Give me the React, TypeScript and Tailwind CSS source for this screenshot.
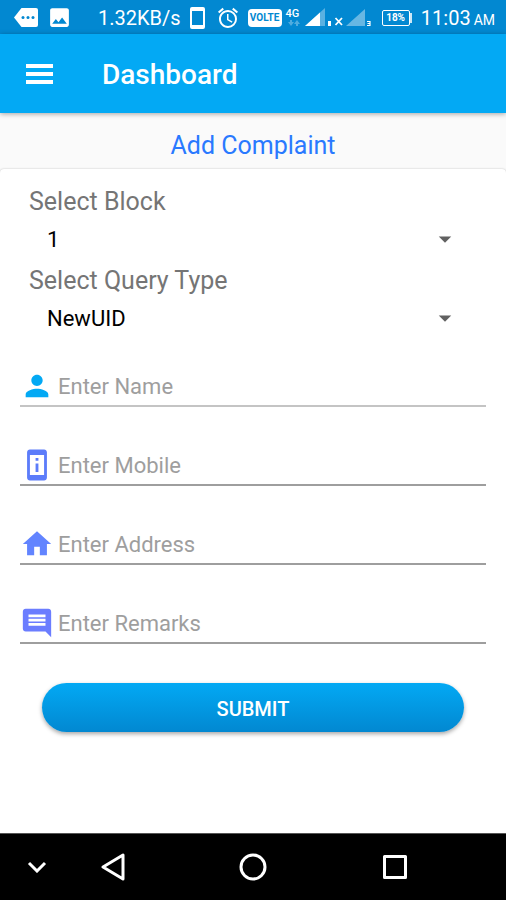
import type { ReactNode } from "react";
import { MdAlarm, MdArrowDropDown, MdComment, MdHome, MdImage, MdPerson, MdPermDeviceInformation } from "react-icons/md";

function StatusBar() {
  return (
    <div className="flex h-[34px] items-center bg-[#0288d1] pt-px pr-[11px] pl-[14px] text-white">
      <svg className="h-[19px] w-6" viewBox="0 0 24 19" aria-hidden="true">
        <path d="M7.500 0H22a2 2 0 0 1 2 2v15a2 2 0 0 1-2 2H7.500L0 9.500z" fill="currentColor" />
        <g fill="#0288d1">
          <circle cx="9" cy="9.500" r="1.500" />
          <circle cx="14" cy="9.500" r="1.500" />
          <circle cx="19" cy="9.500" r="1.500" />
        </g>
      </svg>
      <MdImage className="ml-[9px] size-[25px]" />
      <span className="ml-[26px] text-xl">1.32KB/s</span>
      <svg className="ml-[9px] h-[22px] w-[15px]" viewBox="0 0 15 22" aria-hidden="true">
        <path fillRule="evenodd" d="M2 0h11a2 2 0 0 1 2 2v18a2 2 0 0 1-2 2H2a2 2 0 0 1-2-2V2a2 2 0 0 1 2-2zm0 4v14h11V4z" fill="currentColor" />
      </svg>
      <MdAlarm className="ml-[11px] size-6" />
      <span className="ml-2 flex h-[18px] w-[34px] items-center justify-center rounded-sm bg-white text-[10px] font-bold text-[#0288d1]">VOLTE</span>
      <span className="ml-1 flex h-5 w-[15px] flex-col text-[11px] leading-[12px] font-medium">
        4G
        <svg className="ml-[2px] h-[6px] w-3 opacity-30" viewBox="0 0 12 6" aria-hidden="true">
          <path d="M3 6 0 2h2V0h2v2h2zM9 0l3 4h-2v2H8V4H6z" fill="currentColor" />
        </svg>
      </span>
      <svg className="ml-1 h-[19px] w-[66px]" viewBox="0 0 66 19" aria-hidden="true">
        <path d="M0 18 20 0v18z" fill="currentColor" opacity=".35" />
        <path d="M0 18 15 4.500V18z" fill="currentColor" />
        <path d="M23 13h3v5h-3z" fill="currentColor" />
        <path d="m30.500 10 6.500 7m0-7-6.500 7" stroke="currentColor" strokeWidth="1.800" />
        <path d="M41 18 60 1v17z" fill="currentColor" opacity=".4" />
        <path d="M62 13.500h3v2h-2.500m2.500 0v2h-3" fill="none" stroke="currentColor" strokeWidth="1.200" />
      </svg>
      <span className="ml-[11px] flex h-4 w-7 items-center justify-center rounded-xs border border-white text-[10px] leading-none font-bold">18%</span>
      <span className="h-[10px] w-[2px] bg-white/80" />
      <span className="ml-auto flex items-baseline gap-[3px] text-xl whitespace-nowrap">
        11:03 <span className="text-sm">AM</span>
      </span>
    </div>
  );
}

function Dropdown({ id, label, options }: { id: string; label: string; options: string[] }) {
  return (
    <div>
      <label htmlFor={id} className="block h-8 pl-[9px] text-[25px] leading-[34px] text-[#757575]">
        {label}
      </label>
      <div className="relative">
        <select id={id} className="block h-11 w-full appearance-none bg-transparent pr-16 pl-[27px] text-[22px] text-black outline-none">
          {options.map((option) => (
            <option key={option}>{option}</option>
          ))}
        </select>
        <MdArrowDropDown className="pointer-events-none absolute top-[7px] right-[26px] size-[30px] text-[#616161]" />
      </div>
    </div>
  );
}

function Field({ label, type = "text", light = false, children }: { label: string; type?: string; light?: boolean; children: ReactNode }) {
  return (
    <label className={`flex h-11 items-center gap-1 border-b-2 pt-1 ${light ? "border-[#c4c4c4]" : "border-[#9e9e9e]"}`}>
      {children}
      <input type={type} aria-label={label} placeholder={label} className="h-full min-w-0 flex-1 bg-transparent text-[22px] text-black outline-none placeholder:text-[#9e9e9e]" />
    </label>
  );
}

export default function App() {
  return (
    <div className="flex min-h-screen flex-col bg-[#fafafa] font-[Roboto,sans-serif]">
      <StatusBar />
      <header className="z-10 flex h-[79px] items-center bg-[#03a9f4] pt-[2px] pl-[26px] text-white shadow-[0_1px_5px_rgba(0,0,0,0.35)]">
        <button type="button" aria-label="Open menu" className="flex h-12 w-[27px] flex-col justify-center gap-1 pb-[2px]">
          <span className="h-[4px] bg-white" />
          <span className="h-[4px] bg-white" />
          <span className="h-[4px] bg-white" />
        </button>
        <h1 className="ml-[49px] text-[28px] font-medium">Dashboard</h1>
      </header>
      <h2 className="h-14 pt-[17px] text-center text-[25px] leading-8 text-[#2979ff]">Add Complaint</h2>
      <main className="flex-1 rounded-t bg-white px-5 pt-4 shadow-[0_0_2px_rgba(0,0,0,0.25)]">
        <form onSubmit={(event) => event.preventDefault()}>
          <div className="flex flex-col gap-[3px]">
            <Dropdown id="block" label="Select Block" options={["1"]} />
            <Dropdown id="query-type" label="Select Query Type" options={["NewUID"]} />
          </div>
          <div className="mt-[23px] flex flex-col gap-[35px]">
            <Field label="Enter Name" light>
              <MdPerson className="size-[34px] text-[#03a9f4]" />
            </Field>
            <Field label="Enter Mobile" type="tel">
              <MdPermDeviceInformation className="size-[34px] text-[#5c7cfa]" />
            </Field>
            <Field label="Enter Address">
              <MdHome className="size-[34px] text-[#6284ff]" />
            </Field>
            <Field label="Enter Remarks">
              <MdComment className="size-[34px] text-[#6b7dff]" />
            </Field>
          </div>
          <div className="mt-[39px] px-[22px]">
            <button type="submit" className="h-[49px] w-full rounded-full bg-linear-to-b from-[#03a9f4] to-[#0288d1] pt-[2px] text-xl font-medium text-white shadow-[0_2px_4px_rgba(0,0,0,0.35)]">
              SUBMIT
            </button>
          </div>
        </form>
      </main>
      <nav aria-label="System" className="z-10 flex h-[67px] items-center border-t border-[#555] bg-black pr-[9px] text-white">
        <button type="button" aria-label="Hide navigation" className="flex w-[15%] justify-center">
          <svg className="h-3 w-5" viewBox="0 0 20 12" fill="none" stroke="currentColor" strokeWidth="3" aria-hidden="true">
            <path d="m2 2 8 8 8-8" />
          </svg>
        </button>
        <button type="button" aria-label="Back" className="flex w-[16%] justify-center">
          <svg className="size-7" viewBox="0 0 28 28" fill="none" stroke="currentColor" strokeWidth="3" strokeLinejoin="round" aria-hidden="true">
            <path d="M3 14 23 2v24z" />
          </svg>
        </button>
        <button type="button" aria-label="Home" className="flex w-[40%] justify-center">
          <svg className="size-7" viewBox="0 0 28 28" fill="none" stroke="currentColor" strokeWidth="3" aria-hidden="true">
            <circle cx="14" cy="14" r="12" />
          </svg>
        </button>
        <button type="button" aria-label="Recent apps" className="flex w-[17%] justify-center">
          <svg className="size-7" viewBox="0 0 28 28" fill="none" stroke="currentColor" strokeWidth="3" strokeLinejoin="round" aria-hidden="true">
            <path d="M3.500 3.500h21v21h-21z" />
          </svg>
        </button>
      </nav>
    </div>
  );
}
